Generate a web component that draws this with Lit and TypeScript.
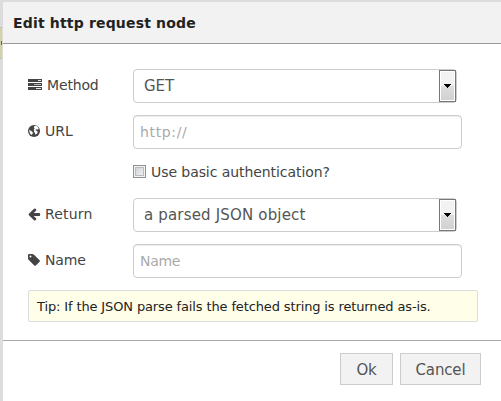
import { LitElement, html, css, svg } from "lit";
import { customElement, property } from "lit/decorators.js";

const icons: Record<string, unknown> = {
  tasks: svg`<svg width="14" height="14" viewBox="0 0 14 14" shape-rendering="crispEdges"><path fill="#444" d="M0 1h14v3H0zM0 5h14v3H0zM0 9h14v3H0z"/><path fill="#e4e4e4" d="M10 2h3v1h-3zM8 10h5v1H8z"/><path fill="#bbb" d="M6 6h7v1H6z"/></svg>`,
  globe: svg`<svg width="12" height="14" viewBox="0 0 12 14"><circle cx="6" cy="7" r="6" fill="#444"/><path fill="#fff" d="M6.2 2.2 8.3 1.8 10 3.2 10.8 5 9.6 5.6 8.2 5.2 7.3 6.2 8.8 6.8 9.8 8.2 8.8 9.8 7.4 10.8 7 9 5.9 7.8 6.2 6.2 5.6 5.4 6.8 4.2 5.8 3.6zM1.4 5.6 2.6 6.8 4.1 7.6 5 9 4.2 10.2 3.6 10.9 2.2 9.800 1.400 8z"/></svg>`,
  arrow: svg`<svg width="14" height="14" viewBox="0 0 1792 1792"><path transform="translate(-110 0)" fill="#444" d="M1664 896v128q0 53-32.5 90.5t-84.5 37.5h-704l293 294q38 36 38 90t-38 90l-75 76q-37 37-90 37-52 0-91-37l-651-652q-37-37-37-90 0-52 37-91l651-650q38-38 91-38 52 0 90 38l75 74q38 38 38 91t-38 91l-293 293h704q52 0 84.5 37.5t32.5 90.5z"/></svg>`,
  tag: svg`<svg width="12" height="14" viewBox="0 0 12 14"><path fill="#444" fill-rule="evenodd" d="M1 1H4.3Q5.2 1 6 1.8L11.6 7.3Q12.2 8 11.6 8.7L7.8 12.6Q7 13.2 6.3 12.6L.8 7Q0 6.200 0 5.300V2Q0 1 1 1zM2.500 2.500A1 1 0 1 0 2.500 4.500A1 1 0 1 0 2.500 2.500z"/></svg>`,
};

@customElement("form-row")
class FormRow extends LitElement {
  @property() icon = "";
  @property() label = "";
  static styles = css`
    :host { display: flex; height: 34px; margin-bottom: 12px; }
    .label { width: 105px; display: flex; height: 32px; align-items: center; color: #444; }
    .icon { display: flex; margin-right: 5px; min-width: 12px; }
    .icon.arrow { width: 12px; }
    .text.arrow { letter-spacing: .2px; }
    .text.tasks, .text.tag { letter-spacing: -.15px; }
    svg { display: block; flex: none; }
  `;
  render() {
    return html`<div class="label"><span class="icon ${this.icon}">${icons[this.icon]}</span><span class="text ${this.icon}">${this.label}</span></div><slot></slot>`;
  }
}

@customElement("app-root")
class AppRoot extends LitElement {
  static styles = css`
    :host { display: block; width: 501px; height: 401px; box-sizing: border-box; overflow: hidden; padding: 2px 0 0 3px; background: #dcdcdc; position: relative; font: 14px/20px Verdana, "DejaVu Sans", sans-serif; color: #444; }
    .behind { position: absolute; left: 0; top: 27px; width: 2px; height: 32px; box-sizing: border-box; background: #d3d1a6; border: solid #bbb; border-width: 1px 0; }
    .behind::after { content: ""; position: absolute; left: 1px; top: 13px; width: 1px; height: 4px; background: #754; }
    .dialog { background: #fff; height: 399px; }
    header { height: 41px; background: #f2f2f2; border-bottom: 1px solid #999; padding-left: 10px; font-weight: bold; font-size: 14px; letter-spacing: .17px; line-height: 43px; color: #222; }
    .form { height: 297px; box-sizing: border-box; padding: 25px 0 0 25px; border-bottom: 1px solid #aaa; }
    .select, .input { box-sizing: border-box; height: 34px; border: 1px solid #ccc; border-radius: 4px; display: flex; align-items: center; color: #555; }
    .select { width: 324px; padding-left: 10px; justify-content: space-between; font-size: 15px; letter-spacing: .17px; }
    .select.short { letter-spacing: -.1px; }
    .input { width: 329px; padding-left: 6px; color: #aaa; box-shadow: inset 0 1px 1px rgba(0,0,0,.075); }
    .url { letter-spacing: .65px; }
    .name { letter-spacing: -.3px; }
    .arrow { width: 17px; height: 32px; box-sizing: border-box; border: 1px solid #777; box-shadow: inset 0 0 0 1px #fff; background: linear-gradient(#f2f2f2 50%, #ddd 50%, #d0d0d0); display: flex; align-items: center; justify-content: center; }
    .check { display: flex; height: 20px; margin: 13px 0 16px 105px; align-items: center; letter-spacing: -.07px; }
    .box { width: 13px; height: 13px; box-sizing: border-box; border: 1px solid #8e8f8f; box-shadow: inset 0 0 0 1px #f4f4f4, inset 0 0 0 2px #bbb; background: linear-gradient(135deg, #c8ccd2, #f6f6f6); margin: -1px 5px 0 0; }
    .tip { width: 450px; height: 32px; box-sizing: border-box; border: 1px solid #ddd; border-radius: 2px; background: #ffffe9; padding-left: 8px; line-height: 31px; font-size: 13px; letter-spacing: -.13px; color: #222; }
    footer { display: flex; justify-content: flex-end; gap: 7px; padding: 12px 20px 0 0; }
    .btn { height: 32px; box-sizing: border-box; border: 1px solid #ccc; background: #f2f2f2; color: #555; font-size: 15px; letter-spacing: -.15px; line-height: 32px; text-align: center; }
    .ok { width: 53px; }
    .cancel { width: 81px; }
  `;
  private select(value: string, size = "") {
    return html`<div class="select ${size}"><span>${value}</span><span class="arrow"><svg width="7" height="4" shape-rendering="crispEdges"><path d="M0 0h7v1H0zM1 1h5v1H1zM2 2h3v1H2zM3 3h1v1H3z"/></svg></span></div>`;
  }
  render() {
    return html`
      <div class="behind"></div>
      <div class="dialog">
        <header><span>Edit http request node</span></header>
        <div class="form">
          <form-row icon="tasks" label="Method">${this.select("GET", "short")}</form-row>
          <form-row icon="globe" label="URL"><div class="input"><span class="url">http://</span></div></form-row>
          <div class="check"><span class="box"></span><span>Use basic authentication?</span></div>
          <form-row icon="arrow" label="Return">${this.select("a parsed JSON object")}</form-row>
          <form-row icon="tag" label="Name"><div class="input"><span class="name">Name</span></div></form-row>
          <div class="tip"><span>Tip: If the JSON parse fails the fetched string is returned as-is.</span></div>
        </div>
        <footer><div class="btn ok"><span>Ok</span></div><div class="btn cancel"><span>Cancel</span></div></footer>
      </div>`;
  }
}
